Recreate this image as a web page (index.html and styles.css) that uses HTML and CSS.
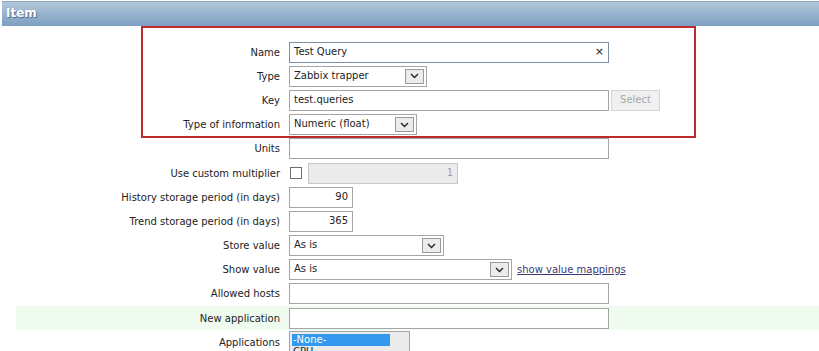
FILE: index.html
```html
<!DOCTYPE html>
<html lang="en">

<head>
    <meta charset="UTF-8">
    <title>Item</title>
    <link rel="stylesheet" href="styles.css">
</head>

<body>
    <div class="header">Item</div>

    <div class="form">
        <div class="row">
            <div class="lbl">Name</div>
            <div class="field">
                <div class="inp wide name">Test Query<span class="clear">&#215;</span></div>
            </div>
        </div>
        <div class="row">
            <div class="lbl">Type</div>
            <div class="field">
                <div class="sel" style="width: 138px">Zabbix trapper<span class="arr"><svg width="9" height="6" viewBox="0 0 9 6"><path d="M1 1 L4.5 4.5 L8 1" fill="none" stroke="#222" stroke-width="1.4"/></svg></span></div>
            </div>
        </div>
        <div class="row">
            <div class="lbl">Key</div>
            <div class="field">
                <div class="inp wide">test.queries</div>
                <div class="btn">Select</div>
            </div>
        </div>
        <div class="row">
            <div class="lbl">Type of information</div>
            <div class="field">
                <div class="sel" style="width: 128px">Numeric (float)<span class="arr"><svg width="9" height="6" viewBox="0 0 9 6"><path d="M1 1 L4.5 4.5 L8 1" fill="none" stroke="#222" stroke-width="1.4"/></svg></span></div>
            </div>
        </div>
        <div class="row">
            <div class="lbl">Units</div>
            <div class="field">
                <div class="inp wide"></div>
            </div>
        </div>
        <div class="row">
            <div class="lbl">Use custom multiplier</div>
            <div class="field">
                <div class="chk"></div>
                <div class="inp off">1</div>
            </div>
        </div>
        <div class="row">
            <div class="lbl">History storage period (in days)</div>
            <div class="field">
                <div class="inp num">90</div>
            </div>
        </div>
        <div class="row">
            <div class="lbl">Trend storage period (in days)</div>
            <div class="field">
                <div class="inp num">365</div>
            </div>
        </div>
        <div class="row">
            <div class="lbl">Store value</div>
            <div class="field">
                <div class="sel" style="width: 155px">As is<span class="arr"><svg width="9" height="6" viewBox="0 0 9 6"><path d="M1 1 L4.5 4.5 L8 1" fill="none" stroke="#222" stroke-width="1.4"/></svg></span></div>
            </div>
        </div>
        <div class="row">
            <div class="lbl">Show value</div>
            <div class="field">
                <div class="sel" style="width: 223px">As is<span class="arr"><svg width="9" height="6" viewBox="0 0 9 6"><path d="M1 1 L4.5 4.5 L8 1" fill="none" stroke="#222" stroke-width="1.4"/></svg></span></div>
                <a class="link" href="#">show value mappings</a>
            </div>
        </div>
        <div class="row">
            <div class="lbl">Allowed hosts</div>
            <div class="field">
                <div class="inp wide"></div>
            </div>
        </div>
        <div class="row new">
            <div class="lbl">New application</div>
            <div class="field">
                <div class="inp wide"></div>
            </div>
        </div>
        <div class="row">
            <div class="lbl">Applications</div>
            <div class="field top">
                <div class="list">
                    <div class="opt on">-None-</div>
                    <div class="opt">CPU</div>
                </div>
            </div>
        </div>
    </div>

    <!-- highlight drawn over the first rows -->
    <div class="mark"></div>
</body>

</html>
```

FILE: styles.css
```css
* {
    margin: 0;
    padding: 0;
    box-sizing: border-box;
}

body {
    background-color: #ffffff;
    font-family: "DejaVu Sans", Verdana, sans-serif;
    font-size: 10px;
    color: #222222;
    overflow: hidden;
}

.header {
    margin: 1px 0 0 2px;
    height: 25px;
    padding: 4px 4px;
    background: linear-gradient(#b3c7db, #7c9fc2);
    border-top: 1px solid #8ea6bd;
    color: #ffffff;
    font-weight: bold;
    font-size: 12px;
    text-shadow: 1px 1px 1px #4c6784;
}

.form {
    padding-top: 14px;
    margin-left: 16px;
}

.row {
    display: flex;
    align-items: center;
    height: 24.2px;
}

.row.new {
    background-color: #f0fbef;
}

.lbl {
    width: 273px;
    text-align: right;
    padding-right: 9px;
    white-space: nowrap;
}

.field {
    display: flex;
    align-items: center;
    gap: 2px;
}

.field.top {
    align-self: flex-start;
    padding-top: 1px;
}

.inp {
    height: 21px;
    border: 1px solid #a5a5a5;
    background: #ffffff;
    padding: 3px 4px;
    position: relative;
    white-space: nowrap;
}

.inp.wide {
    width: 320px;
}

.inp.name {
    border-color: #7f8f9f;
}

.inp.num {
    width: 64px;
    text-align: right;
}

.inp.off {
    width: 150px;
    background: #ebebeb;
    border-color: #c8c8c8;
    color: #a0a0a0;
    text-align: right;
    margin-left: 4px;
}

.clear {
    position: absolute;
    right: 4px;
    top: 2px;
    font-size: 11px;
    color: #222;
}

.btn {
    height: 21px;
    width: 49px;
    background: #f0f0f0;
    border: 1px solid #d4d4d4;
    color: #a8a8a8;
    text-align: center;
    padding-top: 3px;
}

.sel {
    height: 21px;
    border: 1px solid #a5a5a5;
    background: #ffffff;
    padding: 3px 4px;
    position: relative;
    white-space: nowrap;
}

.arr {
    position: absolute;
    right: 2px;
    top: 2px;
    width: 19px;
    height: 15px;
    background: #ececec;
    border: 1px solid #9a9a9a;
    display: flex;
    align-items: center;
    justify-content: center;
}

.chk {
    width: 12px;
    height: 12px;
    border: 1px solid #6e6e6e;
    margin-left: 1px;
}

.link {
    color: #3a3a75;
    margin-left: 3px;
}

.list {
    width: 121px;
    height: 30px;
    border: 1px solid #a5a5a5;
    background: #ebebeb;
    padding: 2px;
    overflow: hidden;
}

.opt {
    width: 98px;
    height: 12px;
    line-height: 12px;
    padding-left: 1px;
}

.opt.on {
    background: #3399ee;
    color: #ffffff;
}

.mark {
    position: absolute;
    left: 141px;
    top: 26px;
    width: 555px;
    height: 112px;
    border: 2px solid #bd2a2c;
}
```
